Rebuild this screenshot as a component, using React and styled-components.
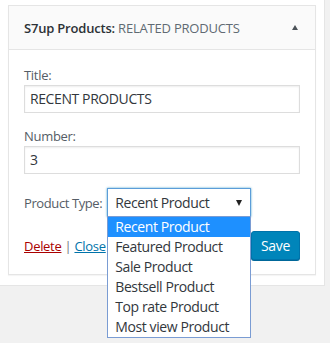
import React from 'react'
import styled, { createGlobalStyle } from 'styled-components'

const GlobalStyle = createGlobalStyle`
  body {
    margin: 0;
    background: #f1f1f1;
    font-family: "Open Sans", "Noto Sans", sans-serif;
    color: #444;
  }
`

const Page = styled.div`
  min-height: 343px;
  background: #f1f1f1;
`

const Holder = styled.div`
  width: 308px;
  padding: 5px 8px 10px 8px;
  background: #fff;
  border-right: 1px solid #e5e5e5;
  border-bottom: 1px solid #e5e5e5;
`

const Widget = styled.div`
  border: 1px solid #e5e5e5;
  box-shadow: 0 1px 1px rgba(0, 0, 0, 0.04);
  background: #fff;
`

const WidgetTop = styled.div`
  height: 43px;
  display: flex;
  align-items: center;
  justify-content: space-between;
  padding: 0 17px 0 15px;
  background: #fafafa;
  border-bottom: 1px solid #e5e5e5;
`

const WidgetTitle = styled.h3`
  margin: 0;
  font-size: 13px;
  font-weight: 600;
  color: #2c3136;
  letter-spacing: -0.2px;
`

const InTitle = styled.span`
  font-weight: 400;
  color: #606a73;
`

const Toggle = styled.span`
  width: 0;
  height: 0;
  border-left: 3.5px solid transparent;
  border-right: 3.5px solid transparent;
  border-bottom: 5px solid #4c5258;
`

const WidgetBody = styled.div`
  padding: 15px 15px 14px;
`

const Field = styled.div`
  margin-bottom: ${props => props.gap || 13}px;
`

const Label = styled.label`
  display: block;
  height: 20px;
  line-height: 20px;
  font-size: 13px;
  color: #555d66;
  letter-spacing: -0.3px;
`

const TextInput = styled.div`
  box-sizing: border-box;
  width: 276px;
  height: 28px;
  padding: 0 5px;
  border: 1px solid #ddd;
  box-shadow: inset 0 1px 2px rgba(0, 0, 0, 0.07);
  font-size: 14px;
  line-height: 26px;
  color: #32373c;
  letter-spacing: -0.4px;
`

const TypeRow = styled.div`
  display: flex;
  align-items: center;
  gap: 5px;
  margin-bottom: 14px;
`

const InlineLabel = styled(Label)`
  display: inline-block;
  letter-spacing: -0.4px;
`

const SelectWrap = styled.div`
  position: relative;
`

const Select = styled.div`
  box-sizing: border-box;
  width: 144px;
  height: 29px;
  display: flex;
  align-items: center;
  justify-content: space-between;
  padding: 0 8px 0 7px;
  border: 1px solid #5b9dd9;
  box-shadow: 0 0 2px rgba(30, 140, 190, 0.8);
  font-size: 14px;
  color: #32373c;
  letter-spacing: -0.4px;
`

const Caret = styled.span`
  width: 0;
  height: 0;
  border-left: 3.5px solid transparent;
  border-right: 3.5px solid transparent;
  border-top: 6px solid #222;
`

const Options = styled.ul`
  position: absolute;
  top: 28px;
  left: 0;
  z-index: 2;
  box-sizing: border-box;
  width: 144px;
  margin: 0;
  padding: 0;
  list-style: none;
  background: #fff;
  border: 1px solid #7a9cd3;
`

const Option = styled.li`
  height: 20px;
  line-height: 20px;
  padding: 0 7px;
  font-size: 14px;
  letter-spacing: -0.4px;
  color: ${props => (props.active ? '#fff' : '#32373c')};
  background: ${props => (props.active ? '#1e90ff' : 'transparent')};
`

const Actions = styled.div`
  display: flex;
  align-items: center;
  justify-content: space-between;
`

const Links = styled.div`
  font-size: 13px;
  color: #72777c;
  letter-spacing: -0.3px;
`

const Link = styled.a`
  color: ${props => props.color || '#0073aa'};
  text-decoration: underline;
  cursor: pointer;
`

const SaveButton = styled.button`
  box-sizing: border-box;
  height: 29px;
  width: 49px;
  padding: 0;
  border: 1px solid #0073aa;
  border-radius: 3px;
  background: #0085ba;
  box-shadow: 0 1px 0 #006799;
  color: #fff;
  font-family: inherit;
  font-size: 14px;
  letter-spacing: -0.3px;
`

const productTypes = [
  'Recent Product',
  'Featured Product',
  'Sale Product',
  'Bestsell Product',
  'Top rate Product',
  'Most view Product',
]

export default function App() {
  return (
    <Page>
      <GlobalStyle />
      <Holder>
        <Widget>
          <WidgetTop>
            <WidgetTitle>
              S7up Products: <InTitle>RELATED PRODUCTS</InTitle>
            </WidgetTitle>
            <Toggle />
          </WidgetTop>
          <WidgetBody>
            <Field>
              <Label>Title:</Label>
              <TextInput>RECENT PRODUCTS</TextInput>
            </Field>
            <Field gap={14}>
              <Label>Number:</Label>
              <TextInput>3</TextInput>
            </Field>
            <TypeRow>
              <InlineLabel>Product Type:</InlineLabel>
              <SelectWrap>
                <Select>
                  Recent Product
                  <Caret />
                </Select>
                <Options>
                  {productTypes.map((type, i) => (
                    <Option key={type} active={i === 0}>
                      {type}
                    </Option>
                  ))}
                </Options>
              </SelectWrap>
            </TypeRow>
            <Actions>
              <Links>
                <Link color="#a00">Delete</Link> | <Link>Close</Link>
              </Links>
              <SaveButton>Save</SaveButton>
            </Actions>
          </WidgetBody>
        </Widget>
      </Holder>
    </Page>
  )
}
